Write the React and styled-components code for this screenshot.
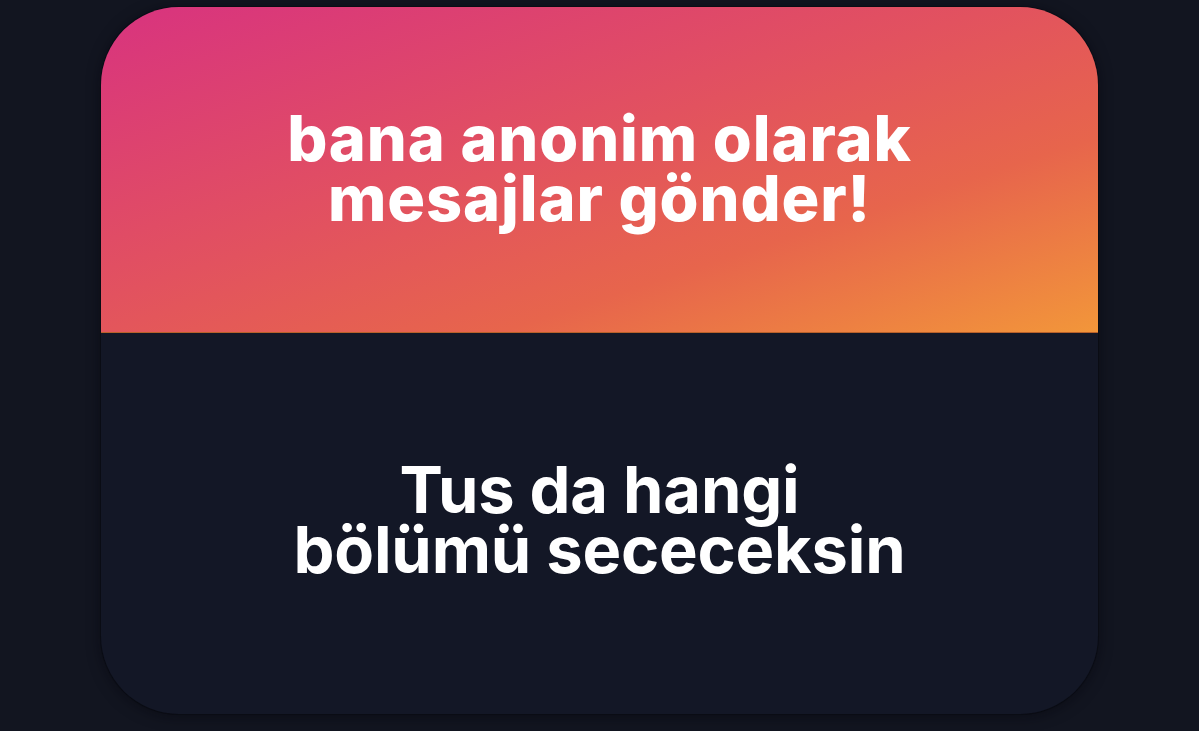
import React from "react";
import styled, { createGlobalStyle } from "styled-components";

const Global = createGlobalStyle`
  html, body {
    margin: 0;
    padding: 0;
    background: #121520;
  }
  body {
    font-family: Inter, "Noto Sans", "Liberation Sans", sans-serif;
    -webkit-font-smoothing: antialiased;
  }
`;

const Page = styled.div`
  width: 1199px;
  height: 731px;
  box-sizing: border-box;
  padding: 7px 0 0 101px;
  background: #121520;
  overflow: hidden;
`;

const Card = styled.div`
  width: 997px;
  height: 707px;
  border-radius: 78px;
  overflow: hidden;
  display: flex;
  flex-direction: column;
  background: #131726;
  box-shadow: 0 0 0 1px rgba(8, 10, 16, 0.6), 0 2px 14px rgba(5, 6, 12, 0.55);
`;

const Header = styled.div`
  height: 326px;
  flex: none;
  box-sizing: border-box;
  border-bottom: 1px solid #b8612a;
  background: linear-gradient(
    to bottom right,
    #d8337f 0%,
    #e2525f 45%,
    #e7654c 70%,
    #f2963a 100%
  );
  display: flex;
  align-items: center;
  justify-content: center;
  padding-bottom: 4px;
`;

const Prompt = styled.h1`
  margin: 0;
  color: #ffffff;
  font-weight: 800;
  font-size: 63px;
  letter-spacing: 0.9px;
  text-align: center;
`;

const Body = styled.div`
  flex: 1;
  display: flex;
  align-items: center;
  justify-content: center;
  padding-bottom: 8px;
`;

const Answer = styled.p`
  margin: 0;
  color: #ffffff;
  font-weight: 700;
  font-size: 65px;
  letter-spacing: -0.2px;
  text-align: center;
`;

/* one line of a stacked heading; fixed line pitch keeps the lines tight */
const Line = styled.span`
  display: block;
  height: 60px;
  line-height: 60px;
  white-space: nowrap;
`;

export default function App() {
  return (
    <>
      <Global />
      <Page>
        <Card>
          <Header>
            <Prompt>
              <Line>bana anonim olarak</Line>
              <Line>mesajlar gönder!</Line>
            </Prompt>
          </Header>
          <Body>
            <Answer>
              <Line>Tus da hangi</Line>
              <Line>bölümü sececeksin</Line>
            </Answer>
          </Body>
        </Card>
      </Page>
    </>
  );
}
